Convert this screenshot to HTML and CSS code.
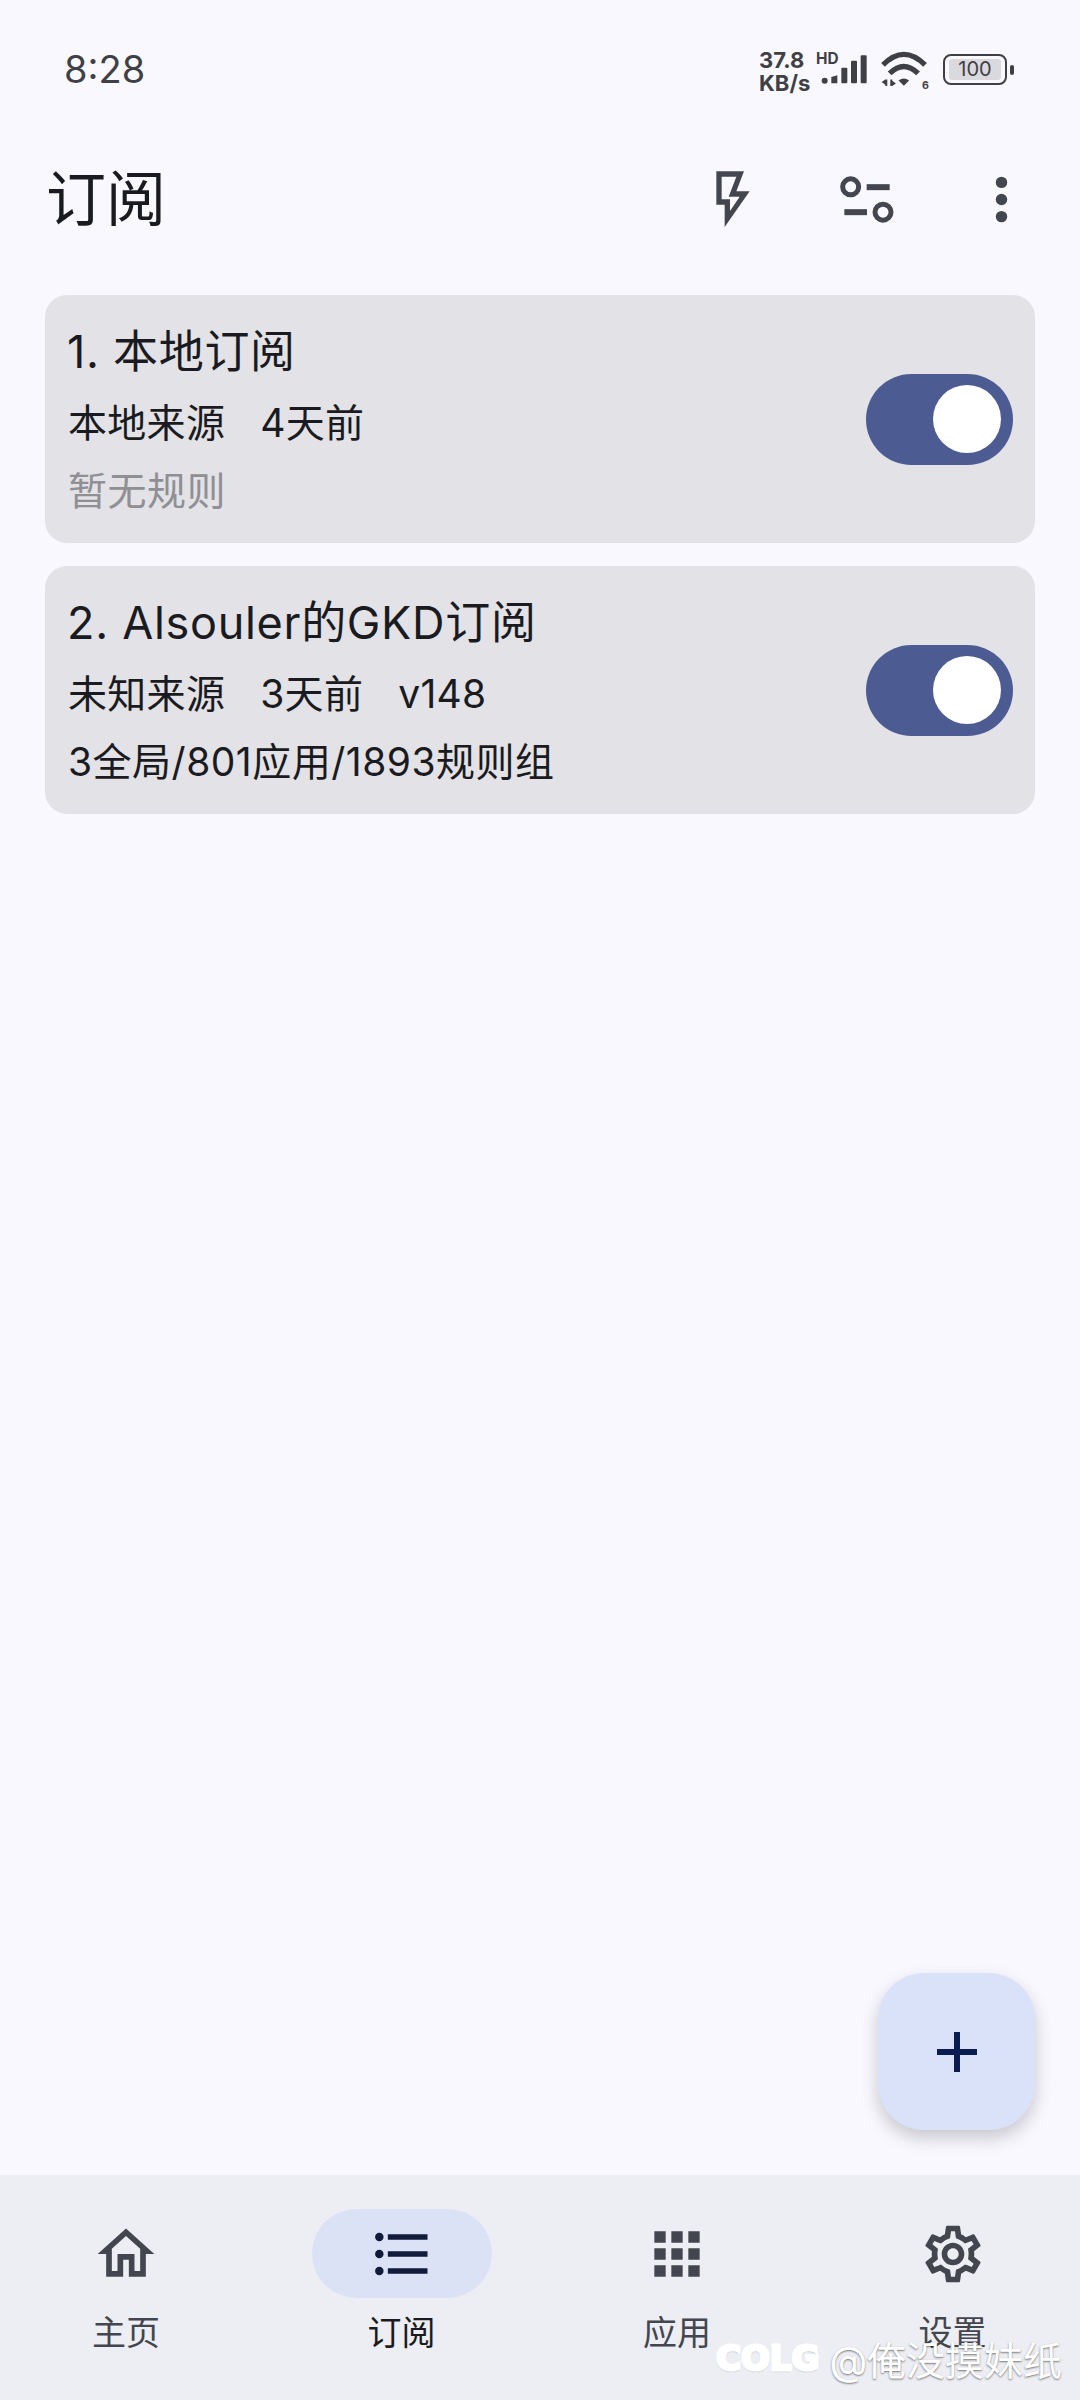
FILE: index.html
```html
<!DOCTYPE html>
<html>
<head>
    <title>订阅</title>
    <meta name="viewport" content="width=device-width, initial-scale=1">
    <link rel="stylesheet" href="styles.css">
</head>
<body>

<div class="page">
    <!-- Status Bar -->
    <div class="status-bar">
        <span class="clock">8:28</span>
        <div class="status-icons">
            <div class="speed"><span>37.8</span><span>KB/s</span></div>
            <svg class="signal" viewBox="294 66 153 99">
                <text x="294" y="103" class="hd">HD</text>
                <circle cx="320" cy="152" r="9"/>
                <path d="M340 141l18-5v24h-18z"/>
                <rect x="370" y="113" width="18" height="47" rx="3"/>
                <rect x="399" y="92" width="18" height="68" rx="3"/>
                <rect x="428" y="76" width="18" height="84" rx="3"/>
            </svg>
            <svg class="wifi" viewBox="484 62 148 122">
                <path class="arc" d="M490 106Q553 42 617 106"/>
                <path class="arc" d="M510 132Q553 90 596 132"/>
                <path d="M537 153Q553 142 569 153L553 169z"/>
                <path d="M497 150v20h6v-20zM486 158l11-8v16zM512 170v-20h6v20zM529 162l-11 8v-16z"/>
                <text x="608" y="180" class="wifi-num">6</text>
            </svg>
            <div class="battery">
                <div class="battery-body"><span class="battery-level">100</span></div>
                <div class="battery-nub"></div>
            </div>
        </div>
    </div>

    <!-- Top Bar -->
    <div class="top-bar">
        <h1>订阅</h1>
        <div class="top-actions">
            <button class="icon-btn" type="button">
                <svg class="bolt" viewBox="105 58 114 180">
                    <path fill-rule="evenodd" d="M112 65H195L172 125H212L137 232V165H112ZM128 81V149H153V184L182 141H149L172 81Z"/>
                </svg>
            </button>
            <button class="icon-btn" type="button">
                <svg class="tune" viewBox="475 75 168 146">
                    <circle cx="510" cy="110" r="24" fill="none" stroke="#44464f" stroke-width="15"/>
                    <rect x="558" y="102" width="69" height="18"/>
                    <rect x="491" y="177" width="68" height="18"/>
                    <circle cx="607" cy="186" r="24" fill="none" stroke="#44464f" stroke-width="15"/>
                </svg>
            </button>
            <button class="icon-btn" type="button">
                <svg class="dots" viewBox="944 78 38 140">
                    <circle cx="963" cy="97" r="17"/>
                    <circle cx="963" cy="148" r="17"/>
                    <circle cx="963" cy="199" r="17"/>
                </svg>
            </button>
        </div>
    </div>

    <!-- Subscription List -->
    <div class="sub-list">
        <div class="sub-card">
            <div class="sub-info">
                <div class="sub-title">1. 本地订阅</div>
                <div class="sub-meta"><span>本地来源</span><span>4天前</span></div>
                <div class="sub-rules muted">暂无规则</div>
            </div>
            <div class="switch"><div class="switch-thumb"></div></div>
        </div>
        <div class="sub-card">
            <div class="sub-info">
                <div class="sub-title">2. Alsouler的GKD订阅</div>
                <div class="sub-meta"><span>未知来源</span><span>3天前</span><span>v148</span></div>
                <div class="sub-rules">3全局/801应用/1893规则组</div>
            </div>
            <div class="switch"><div class="switch-thumb"></div></div>
        </div>
    </div>

    <!-- Add Button -->
    <button class="fab" type="button">
        <svg viewBox="0 0 40 40"><path d="M17 0h6v17h17v6H23v17h-6V23H0v-6h17z"/></svg>
    </button>

    <!-- Bottom Navigation -->
    <nav class="bottom-nav">
        <div class="nav-item">
            <div class="nav-pill">
                <svg viewBox="0 0 24 24"><path d="M12 5.69l5 4.5V18h-2v-6H9v6H7v-7.81l5-4.5M12 3L2 12h3v8h6v-6h2v6h6v-8h3L12 3z"/></svg>
            </div>
            <span>主页</span>
        </div>
        <div class="nav-item active">
            <div class="nav-pill">
                <svg viewBox="0 0 24 24"><path d="M4 10.5c-.83 0-1.5.67-1.5 1.5s.67 1.5 1.5 1.5 1.5-.67 1.5-1.5-.67-1.5-1.5-1.5zm0-6c-.83 0-1.5.67-1.5 1.5S3.17 7.5 4 7.5 5.5 6.83 5.5 6 4.83 4.5 4 4.5zm0 12c-.83 0-1.5.68-1.5 1.5s.68 1.5 1.5 1.5 1.5-.68 1.5-1.5-.67-1.5-1.5-1.5zM7 19h14v-2H7v2zm0-6h14v-2H7v2zm0-8v2h14V5H7z"/></svg>
            </div>
            <span>订阅</span>
        </div>
        <div class="nav-item">
            <div class="nav-pill">
                <svg viewBox="0 0 24 24"><path d="M4 8h4V4H4v4zm6 12h4v-4h-4v4zm-6 0h4v-4H4v4zm0-6h4v-4H4v4zm6 0h4v-4h-4v4zm6-10v4h4V4h-4zm-6 4h4V4h-4v4zm6 6h4v-4h-4v4zm0 6h4v-4h-4v4z"/></svg>
            </div>
            <span>应用</span>
        </div>
        <div class="nav-item">
            <div class="nav-pill">
                <svg viewBox="0 0 24 24"><path d="M19.43 12.98c.04-.32.07-.64.07-.98 0-.34-.03-.66-.07-.98l2.11-1.65c.19-.15.24-.42.12-.64l-2-3.46c-.09-.16-.26-.25-.44-.25-.06 0-.12.01-.17.03l-2.49 1c-.52-.4-1.08-.73-1.69-.98l-.38-2.65C14.46 2.18 14.25 2 14 2h-4c-.25 0-.46.18-.49.42l-.38 2.65c-.61.25-1.17.59-1.69.98l-2.49-1c-.06-.02-.12-.03-.18-.03-.17 0-.34.09-.43.25l-2 3.46c-.13.22-.07.49.12.64l2.11 1.65c-.04.32-.07.65-.07.98 0 .33.03.66.07.98l-2.11 1.65c-.19.15-.24.42-.12.64l2 3.46c.09.16.26.25.44.25.06 0 .12-.01.17-.03l2.49-1c.52.4 1.08.73 1.69.98l.38 2.65c.03.24.24.42.49.42h4c.25 0 .46-.18.49-.42l.38-2.65c.61-.25 1.17-.59 1.69-.98l2.49 1c.06.02.12.03.18.03.17 0 .34-.09.43-.25l2-3.46c.12-.22.07-.49-.12-.64l-2.11-1.65zm-1.98-1.71c.04.31.05.52.05.73 0 .21-.02.43-.05.73l-.14 1.13.89.7 1.08.84-.7 1.21-1.27-.51-1.04-.42-.9.68c-.43.32-.84.56-1.25.73l-1.06.43-.16 1.13-.2 1.35h-1.4l-.19-1.35-.16-1.13-1.06-.43c-.43-.18-.83-.41-1.23-.71l-.91-.7-1.06.43-1.27.51-.7-1.21 1.08-.84.89-.7-.14-1.13c-.03-.31-.05-.54-.05-.74s.02-.43.05-.73l.14-1.13-.89-.7-1.08-.84.7-1.21 1.27.51 1.04.42.9-.68c.43-.32.84-.56 1.25-.73l1.06-.43.16-1.13.2-1.35h1.39l.19 1.35.16 1.13 1.06.43c.43.18.83.41 1.23.71l.91.7 1.06-.43 1.27-.51.7 1.21-1.07.85-.89.7.14 1.13zM12 8c-2.21 0-4 1.79-4 4s1.79 4 4 4 4-1.79 4-4-1.79-4-4-4zm0 6c-1.1 0-2-.9-2-2s.9-2 2-2 2 .9 2 2-.9 2-2 2z"/></svg>
            </div>
            <span>设置</span>
        </div>
    </nav>

    <!-- Watermark -->
    <div class="watermark"><span class="wm-logo">COLG</span><span class="wm-name">@俺没摸妹纸</span></div>
</div>

</body>
</html>
```

FILE: styles.css
```css
/* Reset */
* {
    margin: 0;
    padding: 0;
    box-sizing: border-box;
    font-family: Inter, "Noto Sans CJK SC", sans-serif;
}

body {
    background: #faf8ff;
    color: #1a1b20;
}

svg {
    overflow: visible;
}

.page {
    position: relative;
    display: flex;
    flex-direction: column;
    width: 1080px;
    height: 2400px;
    overflow: hidden;
}

/* Status Bar */
.status-bar {
    display: flex;
    justify-content: space-between;
    align-items: flex-start;
    height: 132px;
    padding: 46px 66px 0 64px;
    color: #3f4045;
}

.clock {
    font-size: 38px;
    line-height: 46px;
}

.status-icons {
    display: flex;
    align-items: flex-start;
}

.speed {
    display: flex;
    flex-direction: column;
    width: 57px;
    margin-top: 3px;
    font-size: 22px;
    line-height: 23px;
    font-weight: 700;
}

.signal {
    width: 51px;
    height: 33px;
    margin-top: 6px;
    fill: #3f4045;
}

.hd {
    font-size: 46px;
    font-weight: 700;
}

.wifi {
    width: 49px;
    height: 41px;
    margin: 4px 0 0 14px;
    fill: #3f4045;
}

.arc {
    fill: none;
    stroke: #3f4045;
    stroke-width: 16;
}

.wifi-num {
    font-size: 32px;
    font-weight: 700;
}

.battery {
    display: flex;
    align-items: center;
    margin: 8px 0 0 13px;
}

.battery-body {
    display: flex;
    width: 64px;
    height: 31px;
    padding: 3px 4px;
    border: 2.5px solid #3f4045;
    border-radius: 8px;
}

.battery-level {
    flex: 1;
    background: #d9d9de;
    border-radius: 3px;
    font-size: 20px;
    line-height: 20px;
    text-align: center;
}

.battery-nub {
    width: 4px;
    height: 10px;
    margin-left: 3px;
    background: #3f4045;
    border-radius: 2px;
}

/* Top Bar */
.top-bar {
    display: flex;
    justify-content: space-between;
    align-items: center;
    height: 134px;
    padding: 0 12px 0 46px;
}

.top-bar h1 {
    font-size: 60px;
    font-weight: 400;
    line-height: 60px;
}

.top-actions {
    display: flex;
}

.icon-btn {
    display: flex;
    justify-content: center;
    align-items: center;
    width: 134px;
    height: 100px;
    background: none;
    border: none;
}

.icon-btn svg {
    fill: #44464f;
}

.bolt {
    width: 38px;
    height: 60px;
}

.tune {
    width: 56px;
    height: 49px;
}

.dots {
    width: 13px;
    height: 47px;
}

/* Subscription Cards */
.sub-list {
    display: flex;
    flex-direction: column;
    gap: 23px;
    padding: 29px 45px 0;
}

.sub-card {
    display: flex;
    justify-content: space-between;
    align-items: center;
    height: 248px;
    padding: 0 22px 0 23px;
    background: #e2e2e7;
    border-radius: 22px;
}

.sub-info {
    display: flex;
    flex-direction: column;
    padding-top: 1px;
}

.sub-title {
    margin-left: -1px;
    font-size: 45px;
    line-height: 72px;
    letter-spacing: 0.7px;
}

.sub-meta {
    display: flex;
    gap: 35px;
    font-size: 39px;
    line-height: 70px;
    letter-spacing: 0.3px;
}

.sub-rules {
    font-size: 39px;
    line-height: 66px;
    letter-spacing: 0.5px;
}

.muted {
    color: #8f8f94;
}

.switch {
    display: flex;
    justify-content: flex-end;
    align-items: center;
    width: 147px;
    height: 91px;
    padding-right: 12px;
    background: #4c5c92;
    border-radius: 46px;
}

.switch-thumb {
    width: 68px;
    height: 68px;
    background: #ffffff;
    border-radius: 50%;
}

/* Add Button */
.fab {
    position: absolute;
    left: 878px;
    top: 1973px;
    display: flex;
    justify-content: center;
    align-items: center;
    width: 157px;
    height: 157px;
    background: #dae2f9;
    border: none;
    border-radius: 46px;
    box-shadow: 0 8px 18px rgba(0, 0, 0, 0.2);
}

.fab svg {
    width: 40px;
    height: 40px;
    fill: #0b1c50;
}

/* Bottom Navigation */
.bottom-nav {
    display: flex;
    gap: 95.5px;
    height: 225px;
    margin-top: auto;
    padding: 34px 36px 0;
    background: #edeef3;
}

.nav-item {
    display: flex;
    flex-direction: column;
    align-items: center;
    gap: 13px;
    width: 180px;
    color: #44464f;
    font-size: 34px;
    line-height: 44px;
}

.nav-pill {
    display: flex;
    justify-content: center;
    align-items: center;
    width: 180px;
    height: 89px;
    border-radius: 45px;
}

.nav-pill svg {
    width: 68px;
    height: 68px;
    fill: #44464f;
}

.nav-item.active {
    color: #1a1b20;
}

.nav-item.active .nav-pill {
    background: #dce2f6;
}

.nav-item.active svg {
    fill: #111c3a;
}

/* Watermark */
.watermark {
    position: absolute;
    left: 716px;
    top: 2330px;
    display: flex;
    align-items: center;
    gap: 10px;
    color: #ffffff;
    text-shadow: 0 1px 2px rgba(0, 0, 0, 0.5);
}

.wm-logo {
    font-family: "DejaVu Sans", sans-serif;
    font-size: 34px;
    font-weight: 700;
    -webkit-text-stroke: 3px #ffffff;
}

.wm-name {
    font-size: 39px;
}
```
